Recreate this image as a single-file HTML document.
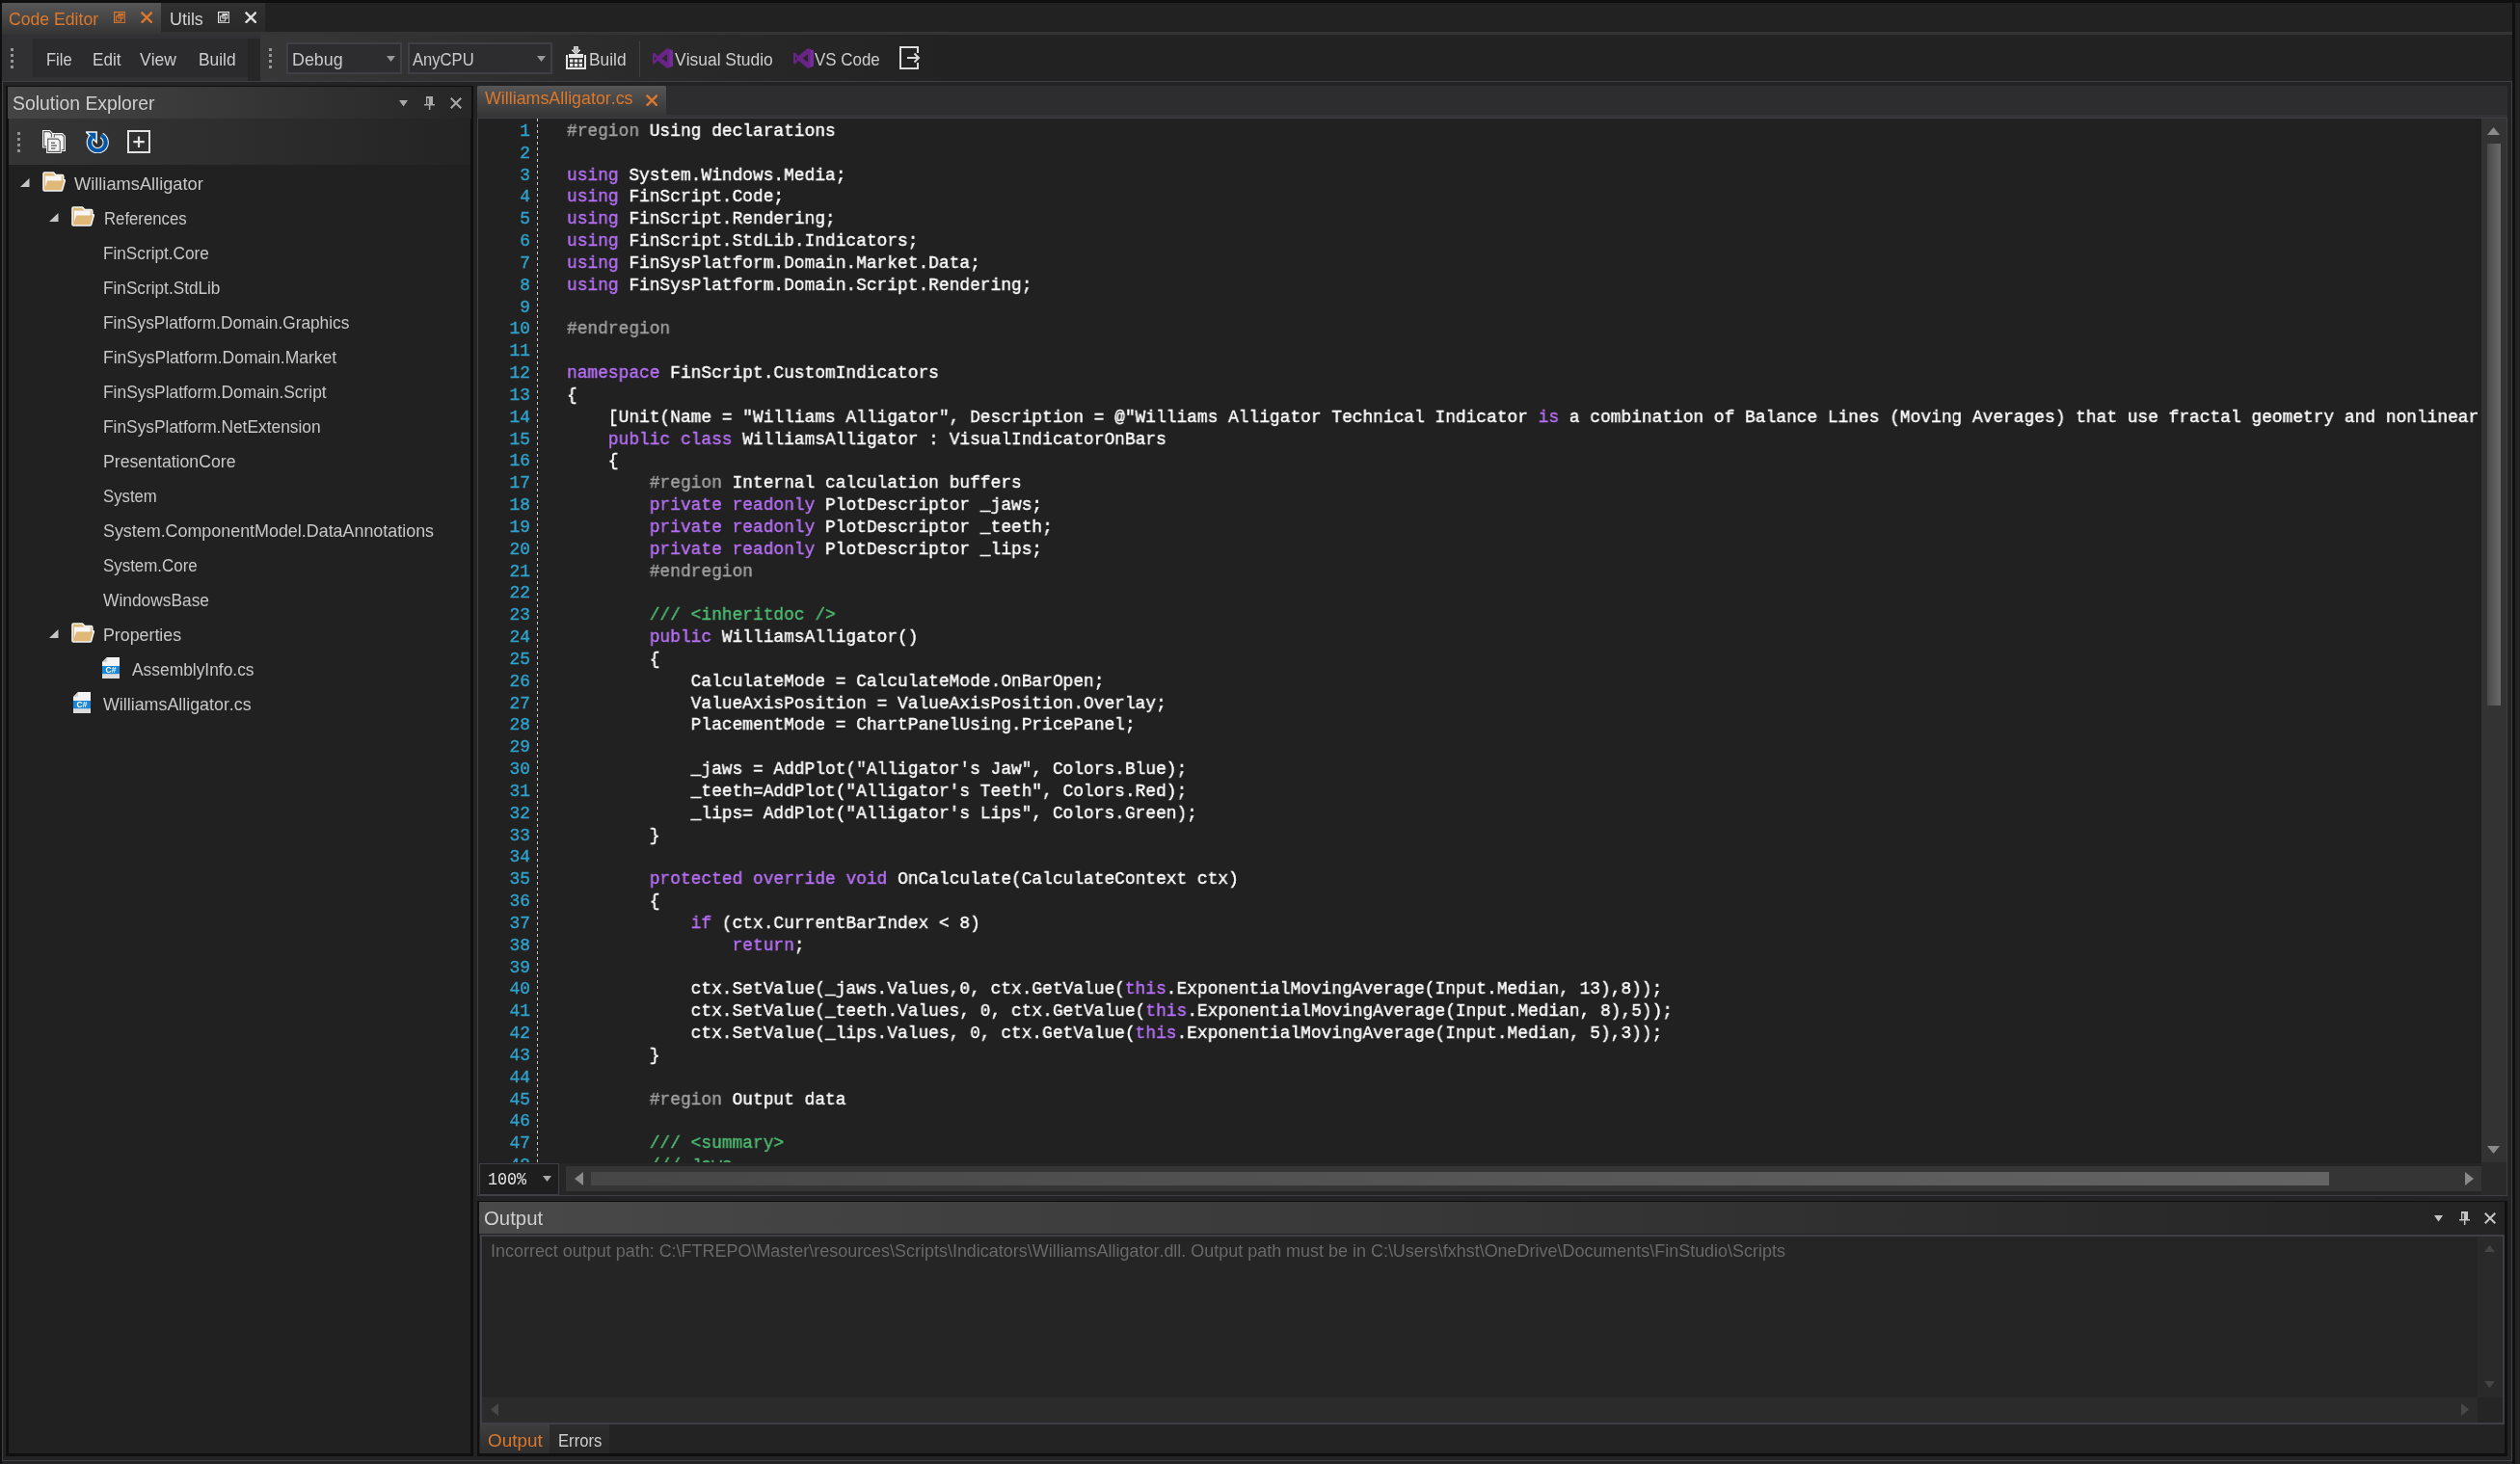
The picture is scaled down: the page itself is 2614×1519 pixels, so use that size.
<!DOCTYPE html>
<html><head><meta charset="utf-8"><title>Code Editor</title><style>html,body{margin:0;padding:0}
body{width:2614px;height:1519px;background:#222;position:relative;overflow:hidden;font-kerning:none;font-variant-ligatures:none}
div,span.t,svg,span.c{position:absolute}
span.t{white-space:pre;line-height:30px;height:30px;transform-origin:0 0;display:block}
span.c{-webkit-text-stroke:.4px currentColor;white-space:pre;line-height:30px;height:30px;left:0;display:block}
</style></head><body>
<div id="root" style="left:0;top:0;width:2614px;height:1519px;will-change:transform">
<div style="left:0px;top:0px;width:2614px;height:3px;background:#0f0f0f"></div>
<div style="left:0px;top:0px;width:2px;height:1519px;background:#0f0f0f"></div>
<div style="left:2606px;top:3px;width:3px;height:1516px;background:#0f0f0f"></div>
<div style="left:2px;top:3px;width:165px;height:33px;background:linear-gradient(#575757,#343434)"></div>
<div style="left:167px;top:3px;width:108px;height:30px;background:linear-gradient(#303030,#292929)"></div>
<div style="left:167px;top:33px;width:2439px;height:3px;background:#343434"></div>
<div style="left:2px;top:36px;width:268px;height:48px;background:#313133"></div>
<div style="left:257px;top:40px;width:13px;height:44px;background:#272727"></div>
<div style="left:34px;top:40px;width:223px;height:40px;background:#2b2b2d"></div>
<div style="left:270px;top:36px;width:720px;height:48px;background:linear-gradient(90deg,#373737,#2c2c2c 45%,#222 100%)"></div>
<div style="left:2px;top:84px;width:2604px;height:1432px;box-sizing:border-box;border:1px solid #3f3f46;background:#232323"></div>
<span class="t" style="left:9.10px;top:5px;font-family:'Liberation Sans',sans-serif;font-size:19.25px;color:#dc782b;transform:scaleX(0.9157);">Code Editor</span>
<span class="t" style="left:175.72px;top:5px;font-family:'Liberation Sans',sans-serif;font-size:19.25px;color:#d2d2d2;transform:scaleX(0.9306);">Utils</span>
<svg style="left:117.8px;top:11.8px;" width="12.4" height="12.4" viewBox="0 0 12.4 12.4"><g fill="none" stroke="#dc782b"><rect x=".6" y=".6" width="11.2" height="11.2" stroke-width="1.2"/><rect x="4.9" y="2.6" width="5" height="4.4" stroke-width="1"/><rect x="2.6" y="4.8" width="5.1" height="5.1" stroke-width="1"/></g><rect x="4.9" y="2.6" width="5" height="1.3" fill="#dc782b"/></svg>
<svg style="left:145.8px;top:11.8px;" width="12.4" height="12.4" viewBox="0 0 12.4 12.4"><path d="M.7 .7L11.700000000000001 11.700000000000001M11.700000000000001 .7L.7 11.700000000000001" stroke="#dc782b" stroke-width="2.4" fill="none"/></svg>
<svg style="left:225.8px;top:11.8px;" width="12.4" height="12.4" viewBox="0 0 12.4 12.4"><g fill="none" stroke="#e0e0e0"><rect x=".6" y=".6" width="11.2" height="11.2" stroke-width="1.2"/><rect x="4.9" y="2.6" width="5" height="4.4" stroke-width="1"/><rect x="2.6" y="4.8" width="5.1" height="5.1" stroke-width="1"/></g><rect x="4.9" y="2.6" width="5" height="1.3" fill="#e0e0e0"/></svg>
<svg style="left:253.8px;top:11.8px;" width="12.4" height="12.4" viewBox="0 0 12.4 12.4"><path d="M.7 .7L11.700000000000001 11.700000000000001M11.700000000000001 .7L.7 11.700000000000001" stroke="#e0e0e0" stroke-width="2.4" fill="none"/></svg>
<div style="left:11px;top:50px;width:3px;height:3px;background:#969696"></div>
<div style="left:11px;top:56px;width:3px;height:3px;background:#969696"></div>
<div style="left:11px;top:62px;width:3px;height:3px;background:#969696"></div>
<div style="left:11px;top:68px;width:3px;height:3px;background:#969696"></div>
<div style="left:279px;top:50px;width:3px;height:3px;background:#969696"></div>
<div style="left:279px;top:56px;width:3px;height:3px;background:#969696"></div>
<div style="left:279px;top:62px;width:3px;height:3px;background:#969696"></div>
<div style="left:279px;top:68px;width:3px;height:3px;background:#969696"></div>
<span class="t" style="left:48.15px;top:47px;font-family:'Liberation Sans',sans-serif;font-size:19.25px;color:#cecece;transform:scaleX(0.8571);">File</span>
<span class="t" style="left:96.40px;top:47px;font-family:'Liberation Sans',sans-serif;font-size:19.25px;color:#cecece;transform:scaleX(0.8871);">Edit</span>
<span class="t" style="left:145.12px;top:47px;font-family:'Liberation Sans',sans-serif;font-size:19.25px;color:#cecece;transform:scaleX(0.9092);">View</span>
<span class="t" style="left:205.88px;top:47px;font-family:'Liberation Sans',sans-serif;font-size:19.25px;color:#cecece;transform:scaleX(0.9003);">Build</span>
<div style="left:297px;top:44px;width:120px;height:33px;box-sizing:border-box;border:2px solid #3f3f46;background:#2d2d30"></div>
<span class="t" style="left:303.04px;top:47px;font-family:'Liberation Sans',sans-serif;font-size:19.25px;color:#cacaca;transform:scaleX(0.9275);">Debug</span>
<svg style="left:401px;top:58px;" width="9" height="6" viewBox="0 0 9 6"><path d="M0 0H9L4.5 6Z" fill="#999"/></svg>
<div style="left:423px;top:44px;width:150px;height:33px;box-sizing:border-box;border:2px solid #3f3f46;background:#2d2d30"></div>
<span class="t" style="left:428.37px;top:47px;font-family:'Liberation Sans',sans-serif;font-size:19.25px;color:#cacaca;transform:scaleX(0.8618);">AnyCPU</span>
<svg style="left:557px;top:58px;" width="9" height="6" viewBox="0 0 9 6"><path d="M0 0H9L4.5 6Z" fill="#999"/></svg>
<svg style="left:587px;top:48px;" width="21" height="24" viewBox="0 0 21 24"><path d="M1 9V23H20V9" fill="none" stroke="#e6e6e6" stroke-width="2"/>
<rect x="3" y="8" width="15" height="4" fill="#e6e6e6"/>
<g fill="#e6e6e6"><rect x="4" y="13.5" width="3.4" height="3.2"/><rect x="8.8" y="13.5" width="3.4" height="3.2"/><rect x="13.6" y="13.5" width="3.4" height="3.2"/><rect x="4" y="18" width="3.4" height="3.2"/><rect x="8.8" y="18" width="3.4" height="3.2"/><rect x="13.6" y="18" width="3.4" height="3.2"/></g>
<path d="M8.5 0H12.5V4H15L10.5 8.5L6 4H8.5Z" fill="#bdbdbd" stroke="#e6e6e6" stroke-width=".8"/></svg>
<span class="t" style="left:610.58px;top:47px;font-family:'Liberation Sans',sans-serif;font-size:19.25px;color:#cecece;transform:scaleX(0.9003);">Build</span>
<div style="left:663px;top:43px;width:1px;height:37px;background:#3f3f46"></div>
<svg style="left:677px;top:50px;" width="21" height="21" viewBox="0 0 21 21"><path fill-rule="evenodd" fill="#6a2488" d="M15 0L21 2.5V18.5L15 21L5 12.8L2 16.5L0 15.5V5.5L2 4.5L5 8.2ZM15 6.2V14.8L9.6 10.5ZM2 8.2L4 10.5L2 12.8Z"/><path d="M17.5 1L21 2.5V18.5L17.5 20Z" fill="#7c38a2" opacity=".55"/></svg>
<span class="t" style="left:699.72px;top:47px;font-family:'Liberation Sans',sans-serif;font-size:19.25px;color:#cecece;transform:scaleX(0.9061);">Visual Studio</span>
<svg style="left:823px;top:50px;" width="21" height="21" viewBox="0 0 21 21"><path fill-rule="evenodd" fill="#6a2488" d="M15 0L21 2.5V18.5L15 21L5 12.8L2 16.5L0 15.5V5.5L2 4.5L5 8.2ZM15 6.2V14.8L9.6 10.5ZM2 8.2L4 10.5L2 12.8Z"/><path d="M17.5 1L21 2.5V18.5L17.5 20Z" fill="#7c38a2" opacity=".55"/></svg>
<span class="t" style="left:845.43px;top:47px;font-family:'Liberation Sans',sans-serif;font-size:19.25px;color:#cecece;transform:scaleX(0.8790);">VS Code</span>
<svg style="left:933px;top:48px;" width="22" height="24" viewBox="0 0 22 24"><path d="M19 7V1H1V23H19V17" fill="none" stroke="#dcdcdc" stroke-width="2"/><path d="M8 12H20M15.5 7.5L20 12L15.5 16.5" fill="none" stroke="#dcdcdc" stroke-width="2"/></svg>
<div style="left:6px;top:89px;width:485px;height:1422px;background:#0f0f0f"></div>
<div style="left:8px;top:90px;width:481px;height:33px;background:linear-gradient(90deg,#454545,#383838 45%,#262626 100%)"></div>
<div style="left:9px;top:123px;width:479px;height:48px;background:linear-gradient(90deg,#353535,#2e2e2e 45%,#242424 100%)"></div>
<div style="left:9px;top:171px;width:479px;height:1337px;background:#212121"></div>
<span class="t" style="left:13.02px;top:92px;font-family:'Liberation Sans',sans-serif;font-size:19.75px;color:#cecece;transform:scaleX(0.9807);">Solution Explorer</span>
<svg style="left:414px;top:104px;" width="9" height="7" viewBox="0 0 9 7"><path d="M0 0H9L4.5 6.5Z" fill="#a8a8a8"/></svg>
<svg style="left:440px;top:100px;" width="12" height="14" viewBox="0 0 12 14"><path d="M2 0H9V8H11V9.4H6.4V14H4.9V9.4H0V8H2ZM3.3 2V8H4.8V2Z" fill="#a8a8a8" fill-rule="evenodd"/></svg>
<svg style="left:467px;top:101px;" width="12" height="12" viewBox="0 0 12 12"><path d="M.7 .7L11.3 11.3M11.3 .7L.7 11.3" stroke="#a8a8a8" stroke-width="2" fill="none"/></svg>
<div style="left:18px;top:137px;width:3px;height:3px;background:#909090"></div>
<div style="left:18px;top:143px;width:3px;height:3px;background:#909090"></div>
<div style="left:18px;top:149px;width:3px;height:3px;background:#909090"></div>
<div style="left:18px;top:155px;width:3px;height:3px;background:#909090"></div>
<svg style="left:44px;top:135px;" width="24" height="24" viewBox="0 0 24 24"><g transform="translate(0,0)"><path d="M0 0H7.8L11 3.2V18.5H0Z" fill="#f4f4f4"/><path d="M1.6 1.6H7.2L9.4 3.9000000000000004V16.9H1.6Z" fill="none" stroke="#5c5c5c" stroke-width="1.1"/></g><g transform="translate(10.7,3.1)"><path d="M0 0H10.100000000000001L13.3 3.2V19H0Z" fill="#f4f4f4"/><path d="M1.6 1.6H9.500000000000002L11.700000000000001 3.9000000000000004V17.4H1.6Z" fill="none" stroke="#5c5c5c" stroke-width="1.1"/></g><g transform="translate(4.1,7.5)"><path d="M0 0H12.5L15.7 3.2V16.5H0Z" fill="#f4f4f4"/><path d="M1.6 1.6H11.9L14.1 3.9000000000000004V14.9H1.6Z" fill="none" stroke="#5c5c5c" stroke-width="1.1"/></g><g fill="#5c5c5c"><rect x="9" y="12.6" width="4" height="1.3"/><rect x="9" y="15.4" width="6" height="1.3"/><rect x="9" y="18.3" width="4.5" height="1.3"/></g></svg>
<svg style="left:89px;top:135px;" width="24" height="24" viewBox="0 0 24 24"><path d="M16.4 5.5A8.4 8.4 0 1 1 6.3 6.9" fill="none" stroke="#f2f2f2" stroke-width="6.4"/>
<path d="M1.8 2.6H10.6V11.4Z" fill="#f2f2f2" stroke="#f2f2f2" stroke-width="2.6" stroke-linejoin="miter"/>
<path d="M16.4 5.5A8.4 8.4 0 1 1 6.3 6.9" fill="none" stroke="#0057a8" stroke-width="4.2"/>
<path d="M2.2 2.8H10.4V11Z" fill="#0057a8"/></svg>
<svg style="left:132px;top:135px;" width="24" height="24" viewBox="0 0 24 24"><rect x="1" y="1" width="22" height="22" fill="none" stroke="#e2e2e2" stroke-width="2"/><path d="M6.3 12.2H17.8M12 6.4V18" stroke="#e2e2e2" stroke-width="2.2"/></svg>
<span class="t" style="left:77.22px;top:176px;font-family:'Liberation Sans',sans-serif;font-size:18.25px;color:#c8c8c8;transform:scaleX(0.9995);">WilliamsAlligator</span>
<svg style="left:21px;top:185px;" width="10" height="9" viewBox="0 0 10 9"><path d="M9.5 0V9H0Z" fill="#c6c6c6"/></svg>
<svg style="left:44px;top:178px;" width="24" height="21" viewBox="0 0 24 21"><path d="M1 2.2Q1 1 2.2 1H11.5L13.8 3.6H20.5Q21.8 3.6 21.8 5V8.6H22.6Q23.6 8.6 23.2 9.8L20.6 19Q20.3 20 19.2 20H2.2Q1 20 1 18.8Z" fill="#e0b878" stroke="#f4f4f4" stroke-width="1.6" stroke-linejoin="round"/>
<path d="M3 4.5H19.8V9.5H5.2L3 16Z" fill="#f6f6f6"/></svg>
<span class="t" style="left:107.53px;top:212px;font-family:'Liberation Sans',sans-serif;font-size:18.25px;color:#c8c8c8;transform:scaleX(0.9170);">References</span>
<svg style="left:51px;top:221px;" width="10" height="9" viewBox="0 0 10 9"><path d="M9.5 0V9H0Z" fill="#c6c6c6"/></svg>
<svg style="left:74px;top:214px;" width="24" height="21" viewBox="0 0 24 21"><path d="M1 2.2Q1 1 2.2 1H11.5L13.8 3.6H20.5Q21.8 3.6 21.8 5V8.6H22.6Q23.6 8.6 23.2 9.8L20.6 19Q20.3 20 19.2 20H2.2Q1 20 1 18.8Z" fill="#e0b878" stroke="#f4f4f4" stroke-width="1.6" stroke-linejoin="round"/>
<path d="M3 4.5H19.8V9.5H5.2L3 16Z" fill="#f6f6f6"/></svg>
<span class="t" style="left:107.29px;top:248px;font-family:'Liberation Sans',sans-serif;font-size:18.25px;color:#c8c8c8;transform:scaleX(0.9412);">FinScript.Core</span>
<span class="t" style="left:107.29px;top:284px;font-family:'Liberation Sans',sans-serif;font-size:18.25px;color:#c8c8c8;transform:scaleX(0.9427);">FinScript.StdLib</span>
<span class="t" style="left:107.28px;top:320px;font-family:'Liberation Sans',sans-serif;font-size:18.25px;color:#c8c8c8;transform:scaleX(0.9465);">FinSysPlatform.Domain.Graphics</span>
<span class="t" style="left:107.26px;top:356px;font-family:'Liberation Sans',sans-serif;font-size:18.25px;color:#c8c8c8;transform:scaleX(0.9590);">FinSysPlatform.Domain.Market</span>
<span class="t" style="left:107.28px;top:392px;font-family:'Liberation Sans',sans-serif;font-size:18.25px;color:#c8c8c8;transform:scaleX(0.9517);">FinSysPlatform.Domain.Script</span>
<span class="t" style="left:107.28px;top:428px;font-family:'Liberation Sans',sans-serif;font-size:18.25px;color:#c8c8c8;transform:scaleX(0.9507);">FinSysPlatform.NetExtension</span>
<span class="t" style="left:106.60px;top:464px;font-family:'Liberation Sans',sans-serif;font-size:18.25px;color:#c8c8c8;transform:scaleX(0.9680);">PresentationCore</span>
<span class="t" style="left:106.99px;top:500px;font-family:'Liberation Sans',sans-serif;font-size:18.25px;color:#c8c8c8;transform:scaleX(0.9165);">System</span>
<span class="t" style="left:106.94px;top:536px;font-family:'Liberation Sans',sans-serif;font-size:18.25px;color:#c8c8c8;transform:scaleX(0.9801);">System.ComponentModel.DataAnnotations</span>
<span class="t" style="left:106.98px;top:572px;font-family:'Liberation Sans',sans-serif;font-size:18.25px;color:#c8c8c8;transform:scaleX(0.9260);">System.Core</span>
<span class="t" style="left:107.07px;top:608px;font-family:'Liberation Sans',sans-serif;font-size:18.25px;color:#c8c8c8;transform:scaleX(0.9513);">WindowsBase</span>
<span class="t" style="left:106.64px;top:644px;font-family:'Liberation Sans',sans-serif;font-size:18.25px;color:#c8c8c8;transform:scaleX(0.9751);">Properties</span>
<svg style="left:51px;top:653px;" width="10" height="9" viewBox="0 0 10 9"><path d="M9.5 0V9H0Z" fill="#c6c6c6"/></svg>
<svg style="left:74px;top:646px;" width="24" height="21" viewBox="0 0 24 21"><path d="M1 2.2Q1 1 2.2 1H11.5L13.8 3.6H20.5Q21.8 3.6 21.8 5V8.6H22.6Q23.6 8.6 23.2 9.8L20.6 19Q20.3 20 19.2 20H2.2Q1 20 1 18.8Z" fill="#e0b878" stroke="#f4f4f4" stroke-width="1.6" stroke-linejoin="round"/>
<path d="M3 4.5H19.8V9.5H5.2L3 16Z" fill="#f6f6f6"/></svg>
<span class="t" style="left:137.27px;top:680px;font-family:'Liberation Sans',sans-serif;font-size:18.25px;color:#c8c8c8;transform:scaleX(0.9526);">AssemblyInfo.cs</span>
<svg style="left:106px;top:682px;" width="18" height="22" viewBox="0 0 18 22"><path d="M5 0H18V22H0V5Z" fill="#f3f3f3"/><path d="M0 5L5 0V5Z" fill="#cfcfcf"/><rect x="0" y="9" width="18" height="8.5" fill="#1c86d9"/><rect x="0" y="17.5" width="18" height="4.5" fill="#dcdcdc"/>
<text x="9" y="16" font-family="Liberation Sans" font-weight="bold" font-size="8.5" fill="#fff" text-anchor="middle">C#</text></svg>
<span class="t" style="left:107.32px;top:716px;font-family:'Liberation Sans',sans-serif;font-size:18.25px;color:#c8c8c8;transform:scaleX(0.9774);">WilliamsAlligator.cs</span>
<svg style="left:76px;top:718px;" width="18" height="22" viewBox="0 0 18 22"><path d="M5 0H18V22H0V5Z" fill="#f3f3f3"/><path d="M0 5L5 0V5Z" fill="#cfcfcf"/><rect x="0" y="9" width="18" height="8.5" fill="#1c86d9"/><rect x="0" y="17.5" width="18" height="4.5" fill="#dcdcdc"/>
<text x="9" y="16" font-family="Liberation Sans" font-weight="bold" font-size="8.5" fill="#fff" text-anchor="middle">C#</text></svg>
<div style="left:495px;top:89px;width:2106px;height:30px;background:#2d2d30"></div>
<div style="left:495px;top:119px;width:2106px;height:3px;background:#343437"></div>
<div style="left:495px;top:89px;width:196px;height:33px;background:linear-gradient(#565656,#343434);border-radius:2px 2px 0 0"></div>
<span class="t" style="left:503.32px;top:87px;font-family:'Liberation Sans',sans-serif;font-size:18.25px;color:#dc782b;transform:scaleX(0.9768);">WilliamsAlligator.cs</span>
<svg style="left:669.5px;top:97.5px;" width="12.5" height="12.5" viewBox="0 0 12.5 12.5"><path d="M.7 .7L11.8 11.8M11.8 .7L.7 11.8" stroke="#dc782b" stroke-width="2.4" fill="none"/></svg>
<div style="left:495px;top:122px;width:2106px;height:1119px;box-sizing:border-box;border:1px solid #3f3f46;background:#212121"></div>
<div style="left:2574px;top:123px;width:26px;height:1083px;background:#333"></div>
<svg style="left:2580px;top:132px;" width="13" height="8" viewBox="0 0 13 8"><path d="M0 8L6.5 0L13 8Z" fill="#8a8a8a"/></svg>
<svg style="left:2580px;top:1189px;" width="13" height="8" viewBox="0 0 13 8"><path d="M0 0H13L6.5 8Z" fill="#8a8a8a"/></svg>
<div style="left:2580px;top:149px;width:14px;height:583px;background:linear-gradient(90deg,#4a4a4a,#6a6a6a)"></div>
<div style="left:2574px;top:1206px;width:26px;height:34px;background:#2a2a2a"></div>
<div style="left:580px;top:1207px;width:1994px;height:33px;background:#262626"></div>
<div style="left:587px;top:1210px;width:1987px;height:26px;background:#353535"></div>
<svg style="left:596px;top:1216px;" width="9" height="14" viewBox="0 0 9 14"><path d="M9 0V14L0 7Z" fill="#8a8a8a"/></svg>
<svg style="left:2557px;top:1216px;" width="9" height="14" viewBox="0 0 9 14"><path d="M0 0V14L9 7Z" fill="#8a8a8a"/></svg>
<div style="left:613px;top:1216px;width:1803px;height:14px;background:linear-gradient(90deg,#464646,#646464)"></div>
<div style="left:497px;top:1207px;width:83px;height:33px;box-sizing:border-box;border:1px solid #3f3f46;background:#1e1e1e"></div>
<span class="t" style="left:506.39px;top:1209px;font-family:'Liberation Mono',monospace;font-size:19px;color:#e8e8e8;transform:scaleX(0.8792);">100%</span>
<svg style="left:563px;top:1220px;" width="9" height="6" viewBox="0 0 9 6"><path d="M0 0H9L4.5 6Z" fill="#aaa"/></svg>
<div style="left:496px;top:123px;width:2078px;height:1083px;overflow:hidden">
<div style="left:61px;top:0;width:1px;height:1083px;background:repeating-linear-gradient(#c4c4c4 0 3px,transparent 3px 6px)"></div>
<div style="left:11px;top:0;width:0;height:0;transform:scaleX(0.9402);transform-origin:0 0;font-family:'Liberation Mono',monospace;font-size:19px;color:#2fa2cc">
<span class="c" style="top:-2px">&nbsp;&nbsp;&nbsp;1</span>
<span class="c" style="top:21px">&nbsp;&nbsp;&nbsp;2</span>
<span class="c" style="top:44px">&nbsp;&nbsp;&nbsp;3</span>
<span class="c" style="top:66px">&nbsp;&nbsp;&nbsp;4</span>
<span class="c" style="top:89px">&nbsp;&nbsp;&nbsp;5</span>
<span class="c" style="top:112px">&nbsp;&nbsp;&nbsp;6</span>
<span class="c" style="top:135px">&nbsp;&nbsp;&nbsp;7</span>
<span class="c" style="top:158px">&nbsp;&nbsp;&nbsp;8</span>
<span class="c" style="top:181px">&nbsp;&nbsp;&nbsp;9</span>
<span class="c" style="top:203px">&nbsp;&nbsp;10</span>
<span class="c" style="top:226px">&nbsp;&nbsp;11</span>
<span class="c" style="top:249px">&nbsp;&nbsp;12</span>
<span class="c" style="top:272px">&nbsp;&nbsp;13</span>
<span class="c" style="top:295px">&nbsp;&nbsp;14</span>
<span class="c" style="top:318px">&nbsp;&nbsp;15</span>
<span class="c" style="top:340px">&nbsp;&nbsp;16</span>
<span class="c" style="top:363px">&nbsp;&nbsp;17</span>
<span class="c" style="top:386px">&nbsp;&nbsp;18</span>
<span class="c" style="top:409px">&nbsp;&nbsp;19</span>
<span class="c" style="top:432px">&nbsp;&nbsp;20</span>
<span class="c" style="top:455px">&nbsp;&nbsp;21</span>
<span class="c" style="top:477px">&nbsp;&nbsp;22</span>
<span class="c" style="top:500px">&nbsp;&nbsp;23</span>
<span class="c" style="top:523px">&nbsp;&nbsp;24</span>
<span class="c" style="top:546px">&nbsp;&nbsp;25</span>
<span class="c" style="top:569px">&nbsp;&nbsp;26</span>
<span class="c" style="top:592px">&nbsp;&nbsp;27</span>
<span class="c" style="top:614px">&nbsp;&nbsp;28</span>
<span class="c" style="top:637px">&nbsp;&nbsp;29</span>
<span class="c" style="top:660px">&nbsp;&nbsp;30</span>
<span class="c" style="top:683px">&nbsp;&nbsp;31</span>
<span class="c" style="top:706px">&nbsp;&nbsp;32</span>
<span class="c" style="top:729px">&nbsp;&nbsp;33</span>
<span class="c" style="top:751px">&nbsp;&nbsp;34</span>
<span class="c" style="top:774px">&nbsp;&nbsp;35</span>
<span class="c" style="top:797px">&nbsp;&nbsp;36</span>
<span class="c" style="top:820px">&nbsp;&nbsp;37</span>
<span class="c" style="top:843px">&nbsp;&nbsp;38</span>
<span class="c" style="top:866px">&nbsp;&nbsp;39</span>
<span class="c" style="top:888px">&nbsp;&nbsp;40</span>
<span class="c" style="top:911px">&nbsp;&nbsp;41</span>
<span class="c" style="top:934px">&nbsp;&nbsp;42</span>
<span class="c" style="top:957px">&nbsp;&nbsp;43</span>
<span class="c" style="top:980px">&nbsp;&nbsp;44</span>
<span class="c" style="top:1003px">&nbsp;&nbsp;45</span>
<span class="c" style="top:1025px">&nbsp;&nbsp;46</span>
<span class="c" style="top:1048px">&nbsp;&nbsp;47</span>
<span class="c" style="top:1071px">&nbsp;&nbsp;48</span>
</div>
<div style="left:91.5px;top:0;width:0;height:0;transform:scaleX(0.9402);transform-origin:0 0;font-family:'Liberation Mono',monospace;font-size:19px;color:#ffffff">
<span class="c" style="top:-2px"><span style="color:#a0a0a0">#region </span>Using declarations</span>
<span class="c" style="top:44px"><span style="color:#b870f8">using</span> System.Windows.Media;</span>
<span class="c" style="top:66px"><span style="color:#b870f8">using</span> FinScript.Code;</span>
<span class="c" style="top:89px"><span style="color:#b870f8">using</span> FinScript.Rendering;</span>
<span class="c" style="top:112px"><span style="color:#b870f8">using</span> FinScript.StdLib.Indicators;</span>
<span class="c" style="top:135px"><span style="color:#b870f8">using</span> FinSysPlatform.Domain.Market.Data;</span>
<span class="c" style="top:158px"><span style="color:#b870f8">using</span> FinSysPlatform.Domain.Script.Rendering;</span>
<span class="c" style="top:203px"><span style="color:#a0a0a0">#endregion</span></span>
<span class="c" style="top:249px"><span style="color:#b870f8">namespace</span> FinScript.CustomIndicators</span>
<span class="c" style="top:272px">{</span>
<span class="c" style="top:295px">    [Unit(Name = &quot;Williams Alligator&quot;, Description = @&quot;Williams Alligator Technical Indicator <span style="color:#b870f8">is</span> a combination of Balance Lines (Moving Averages) that use fractal geometry and nonlinear dynamics</span>
<span class="c" style="top:318px">    <span style="color:#b870f8">public</span> <span style="color:#b870f8">class</span> WilliamsAlligator : VisualIndicatorOnBars</span>
<span class="c" style="top:340px">    {</span>
<span class="c" style="top:363px">        <span style="color:#a0a0a0">#region </span>Internal calculation buffers</span>
<span class="c" style="top:386px">        <span style="color:#b870f8">private</span> <span style="color:#b870f8">readonly</span> PlotDescriptor _jaws;</span>
<span class="c" style="top:409px">        <span style="color:#b870f8">private</span> <span style="color:#b870f8">readonly</span> PlotDescriptor _teeth;</span>
<span class="c" style="top:432px">        <span style="color:#b870f8">private</span> <span style="color:#b870f8">readonly</span> PlotDescriptor _lips;</span>
<span class="c" style="top:455px">        <span style="color:#a0a0a0">#endregion</span></span>
<span class="c" style="top:500px">        <span style="color:#4fbc72">/// &lt;inheritdoc /&gt;</span></span>
<span class="c" style="top:523px">        <span style="color:#b870f8">public</span> WilliamsAlligator()</span>
<span class="c" style="top:546px">        {</span>
<span class="c" style="top:569px">            CalculateMode = CalculateMode.OnBarOpen;</span>
<span class="c" style="top:592px">            ValueAxisPosition = ValueAxisPosition.Overlay;</span>
<span class="c" style="top:614px">            PlacementMode = ChartPanelUsing.PricePanel;</span>
<span class="c" style="top:660px">            _jaws = AddPlot(&quot;Alligator&#x27;s Jaw&quot;, Colors.Blue);</span>
<span class="c" style="top:683px">            _teeth=AddPlot(&quot;Alligator&#x27;s Teeth&quot;, Colors.Red);</span>
<span class="c" style="top:706px">            _lips= AddPlot(&quot;Alligator&#x27;s Lips&quot;, Colors.Green);</span>
<span class="c" style="top:729px">        }</span>
<span class="c" style="top:774px">        <span style="color:#b870f8">protected</span> <span style="color:#b870f8">override</span> <span style="color:#b870f8">void</span> OnCalculate(CalculateContext ctx)</span>
<span class="c" style="top:797px">        {</span>
<span class="c" style="top:820px">            <span style="color:#b870f8">if</span> (ctx.CurrentBarIndex &lt; 8)</span>
<span class="c" style="top:843px">                <span style="color:#b870f8">return</span>;</span>
<span class="c" style="top:888px">            ctx.SetValue(_jaws.Values,0, ctx.GetValue(<span style="color:#b870f8">this</span>.ExponentialMovingAverage(Input.Median, 13),8));</span>
<span class="c" style="top:911px">            ctx.SetValue(_teeth.Values, 0, ctx.GetValue(<span style="color:#b870f8">this</span>.ExponentialMovingAverage(Input.Median, 8),5));</span>
<span class="c" style="top:934px">            ctx.SetValue(_lips.Values, 0, ctx.GetValue(<span style="color:#b870f8">this</span>.ExponentialMovingAverage(Input.Median, 5),3));</span>
<span class="c" style="top:957px">        }</span>
<span class="c" style="top:1003px">        <span style="color:#a0a0a0">#region </span>Output data</span>
<span class="c" style="top:1048px">        <span style="color:#4fbc72">/// &lt;summary&gt;</span></span>
<span class="c" style="top:1071px">        <span style="color:#4fbc72">/// Jaws</span></span>
</div></div>
<div style="left:495px;top:1246px;width:2106px;height:265px;background:#0f0f0f"></div>
<div style="left:497px;top:1247px;width:2101px;height:33px;background:linear-gradient(90deg,#494949,#3c3c3c 35%,#232323 100%)"></div>
<div style="left:497px;top:1280px;width:2101px;height:228px;background:#232323"></div>
<span class="t" style="left:502.34px;top:1249px;font-family:'Liberation Sans',sans-serif;font-size:19.75px;color:#cecece;transform:scaleX(1.0308);">Output</span>
<svg style="left:2525px;top:1261px;" width="9" height="7" viewBox="0 0 9 7"><path d="M0 0H9L4.5 6.5Z" fill="#c6c6c6"/></svg>
<svg style="left:2551px;top:1257px;" width="12" height="14" viewBox="0 0 12 14"><path d="M2 0H9V8H11V9.4H6.4V14H4.9V9.4H0V8H2ZM3.3 2V8H4.8V2Z" fill="#c6c6c6" fill-rule="evenodd"/></svg>
<svg style="left:2577px;top:1258px;" width="12" height="12" viewBox="0 0 12 12"><path d="M.7 .7L11.3 11.3M11.3 .7L.7 11.3" stroke="#c6c6c6" stroke-width="2" fill="none"/></svg>
<div style="left:498px;top:1281px;width:2100px;height:197px;box-sizing:border-box;border:2px solid #3f3f46;background:#252525"></div>
<div style="left:2570px;top:1283px;width:26px;height:167px;background:#2a2a2a"></div>
<div style="left:500px;top:1450px;width:2070px;height:26px;background:#2b2b2b"></div>
<svg style="left:2577px;top:1292px;" width="11" height="7" viewBox="0 0 11 7"><path d="M0 7L5.5 0L11 7Z" fill="#454545"/></svg>
<svg style="left:2577px;top:1433px;" width="11" height="7" viewBox="0 0 11 7"><path d="M0 0H11L5.5 7Z" fill="#454545"/></svg>
<svg style="left:509px;top:1456px;" width="8" height="13" viewBox="0 0 8 13"><path d="M8 0V13L0 6.5Z" fill="#484848"/></svg>
<svg style="left:2553px;top:1456px;" width="8" height="13" viewBox="0 0 8 13"><path d="M0 0V13L8 6.5Z" fill="#484848"/></svg>
<span class="t" style="left:509.34px;top:1283px;font-family:'Liberation Sans',sans-serif;font-size:19.25px;color:#686868;transform:scaleX(0.9326);">Incorrect output path: C:\FTREPO\Master\resources\Scripts\Indicators\WilliamsAlligator.dll. Output path must be in C:\Users\fxhst\OneDrive\Documents\FinStudio\Scripts</span>
<div style="left:498px;top:1478px;width:72px;height:30px;background:linear-gradient(#3e3e3e,#2d2d2d)"></div>
<div style="left:570px;top:1478px;width:62px;height:30px;background:linear-gradient(#2c2c2c,#272727)"></div>
<span class="t" style="left:505.51px;top:1480px;font-family:'Liberation Sans',sans-serif;font-size:18.5px;color:#dc782b;transform:scaleX(1.0197);">Output</span>
<span class="t" style="left:578.84px;top:1480px;font-family:'Liberation Sans',sans-serif;font-size:18.5px;color:#cecece;transform:scaleX(0.8988);">Errors</span>
</div>
</body></html>
